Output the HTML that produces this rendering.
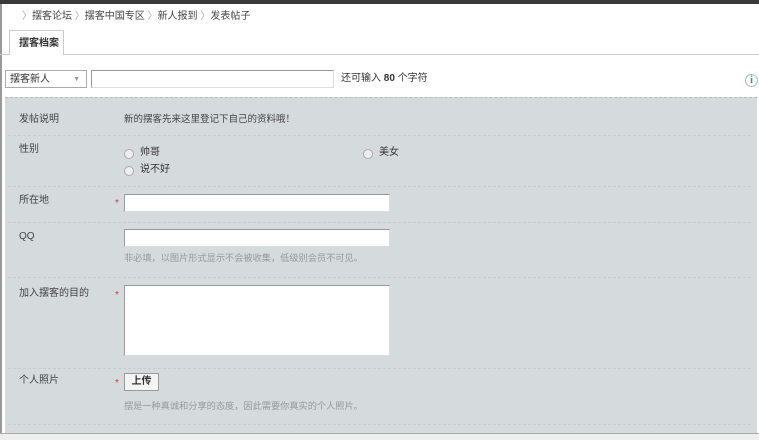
<!DOCTYPE html>
<html><head><meta charset="utf-8"><style>
*{margin:0;padding:0;box-sizing:border-box}
body{width:759px;height:440px;overflow:hidden;background:#fff;font-family:"Liberation Sans","Noto Sans CJK SC",sans-serif;font-size:10px;line-height:12px;color:#333;position:relative}
.a{position:absolute}
.lbl{position:absolute;left:19px;color:#444}
.inp{position:absolute;background:#fff;border:1px solid #999;border-right-color:#ddd;border-bottom-color:#ddd}
.hr{position:absolute;left:8px;right:8px;border-top:1px dashed #c8ccce}
.rad{position:absolute;width:10px;height:10px;border:1px solid #aaa;border-radius:50%;background:#eee}
.star{position:absolute;left:115px;color:#e33;font-size:10px}
.hint{position:absolute;left:124px;color:#999;font-size:9.2px}
</style></head><body>
<div class="a" style="left:0;top:0;width:759px;height:4px;background:#3a3a3a"></div>
<div class="a" style="left:0;top:4px;width:2px;height:430px;background:#999"></div>
<div class="a" style="left:22px;top:11px;color:#aaa">〉<span style="color:#444">摆客论坛</span> 〉<span style="color:#444">摆客中国专区</span> 〉<span style="color:#444">新人报到</span> 〉<span style="color:#444">发表帖子</span></div>
<div class="a" style="left:0;top:54px;width:759px;border-top:1px solid #ccc"></div>
<div class="a" style="left:9px;top:30px;width:55px;height:25px;border:1px solid #ccc;border-bottom:none;background:#fff;font-weight:bold;font-size:10px;padding:7px 0 0 9px;color:#333">摆客档案</div>
<div class="a" style="left:5px;top:70px;width:82px;height:18px;border:1px solid #aaa;background:#fff;padding:3px 0 0 4px">摆客新人<span style="position:absolute;right:6px;top:3px;color:#999;font-size:7px">▼</span></div>
<div class="inp" style="left:91px;top:70px;width:243px;height:18px"></div>
<div class="a" style="left:341px;top:73px">还可输入 <b>80</b> 个字符</div>
<div class="a" style="left:745px;top:74px;width:13px;height:13px;border:1px solid #9bc;border-radius:50%;color:#3a8ab0;font-size:10px;font-weight:bold;text-align:center;line-height:12px;font-family:'Liberation Serif',serif">i</div>
<div class="a" style="left:5px;top:97px;width:752px;height:336px;background:#d5dadc;border-top:1px dashed #bbb"></div>
<div class="lbl" style="top:114px">发帖说明</div>
<div class="a" style="left:124px;top:114px;color:#444;font-size:9.5px">新的摆客先来这里登记下自己的资料哦！</div>
<div class="hr" style="top:135px"></div>
<div class="lbl" style="top:144px">性别</div>
<div class="rad" style="left:124px;top:149px"></div><div class="a" style="left:140px;top:147px">帅哥</div>
<div class="rad" style="left:363px;top:149px"></div><div class="a" style="left:379px;top:147px">美女</div>
<div class="rad" style="left:124px;top:166px"></div><div class="a" style="left:140px;top:164px">说不好</div>
<div class="hr" style="top:186px"></div>
<div class="lbl" style="top:195px">所在地</div><div class="star" style="top:198px">*</div>
<div class="inp" style="left:124px;top:194px;width:266px;height:18px"></div>
<div class="hr" style="top:222px"></div>
<div class="lbl" style="top:231px">QQ</div>
<div class="inp" style="left:124px;top:229px;width:266px;height:18px"></div>
<div class="hint" style="top:252px">非必填，以图片形式显示不会被收集，低级别会员不可见。</div>
<div class="hr" style="top:277px"></div>
<div class="lbl" style="top:288px">加入摆客的目的</div><div class="star" style="top:290px">*</div>
<div class="inp" style="left:124px;top:285px;width:266px;height:71px"></div>
<div class="hr" style="top:368px"></div>
<div class="lbl" style="top:375px">个人照片</div><div class="star" style="top:378px">*</div>
<div class="a" style="left:124px;top:373px;width:35px;height:18px;border:1px solid #999;background:#f4f4f4;text-align:center;line-height:16px;font-weight:bold;font-size:10px">上传</div>
<div class="hint" style="top:400px">摆是一种真诚和分享的态度，因此需要你真实的个人照片。</div>
<div class="hr" style="top:424px"></div>
<div class="a" style="left:0;top:433px;width:759px;height:7px;background:#eeeeee;border-top:1px solid #aaa"></div>
</body></html>
